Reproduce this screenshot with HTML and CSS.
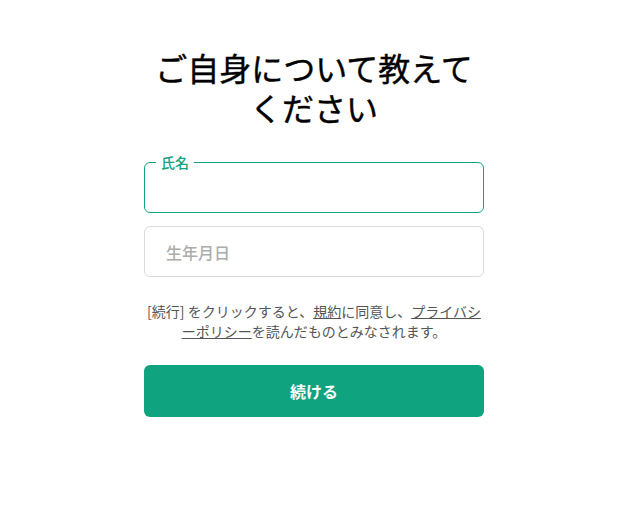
FILE: index.html
```html
<!DOCTYPE html>
<html lang="ja">
<head>
<meta charset="utf-8">
<link rel="stylesheet" href="styles.css">
</head>
<body>
<main class="page">
  <h1 class="title">ご自身について教えてください</h1>
  <div class="field field-active">
    <span class="field-label">氏名</span>
  </div>
  <div class="field">
    <span class="placeholder">生年月日</span>
  </div>
  <p class="terms">[続行] をクリックすると、<a href="#">規約</a>に同意し、<a href="#">プライバシーポリシー</a>を読んだものとみなされます。</p>
  <button class="submit">続ける</button>
</main>
</body>
</html>
```
FILE: styles.css
```css
* { box-sizing: border-box; }
body {
  margin: 0;
  padding-left: 2px;
  background: #fff;
  font-family: "Noto Sans CJK JP", "Noto Sans", sans-serif;
  color: #000;
}
.page {
  width: 340px;
  margin: 0 auto;
  padding-top: 47px;
  display: flex;
  flex-direction: column;
}
.title {
  margin: 0 0 35px;
  font-size: 32px;
  line-height: 40px;
  font-weight: 400;
  text-align: center;
  color: #000;
  -webkit-text-stroke: 0.4px #000;
}
.field {
  position: relative;
  height: 51px;
  border: 1px solid #d9d9e0;
  border-radius: 6px;
  display: flex;
  align-items: center;
  padding: 0 21px;
  margin-bottom: 13px;
}
.field-active {
  border-color: #10a37f;
}
.field-label {
  position: absolute;
  left: 11px;
  top: -10px;
  padding: 0 5px;
  background: #fff;
  font-size: 14px;
  line-height: 18px;
  font-weight: 500;
  color: #10a37f;
}
.placeholder {
  font-size: 16px;
  font-weight: 500;
  color: #acacac;
}
.terms {
  margin: 11px 0 24px;
  font-size: 14px;
  line-height: 20px;
  text-align: center;
  color: #555;
}
.terms a {
  color: #555;
  text-decoration: underline;
}
.submit {
  height: 52px;
  border: none;
  border-radius: 6px;
  background: #10a37f;
  color: #fff;
  font-family: inherit;
  font-size: 16px;
  font-weight: 600;
}
```
